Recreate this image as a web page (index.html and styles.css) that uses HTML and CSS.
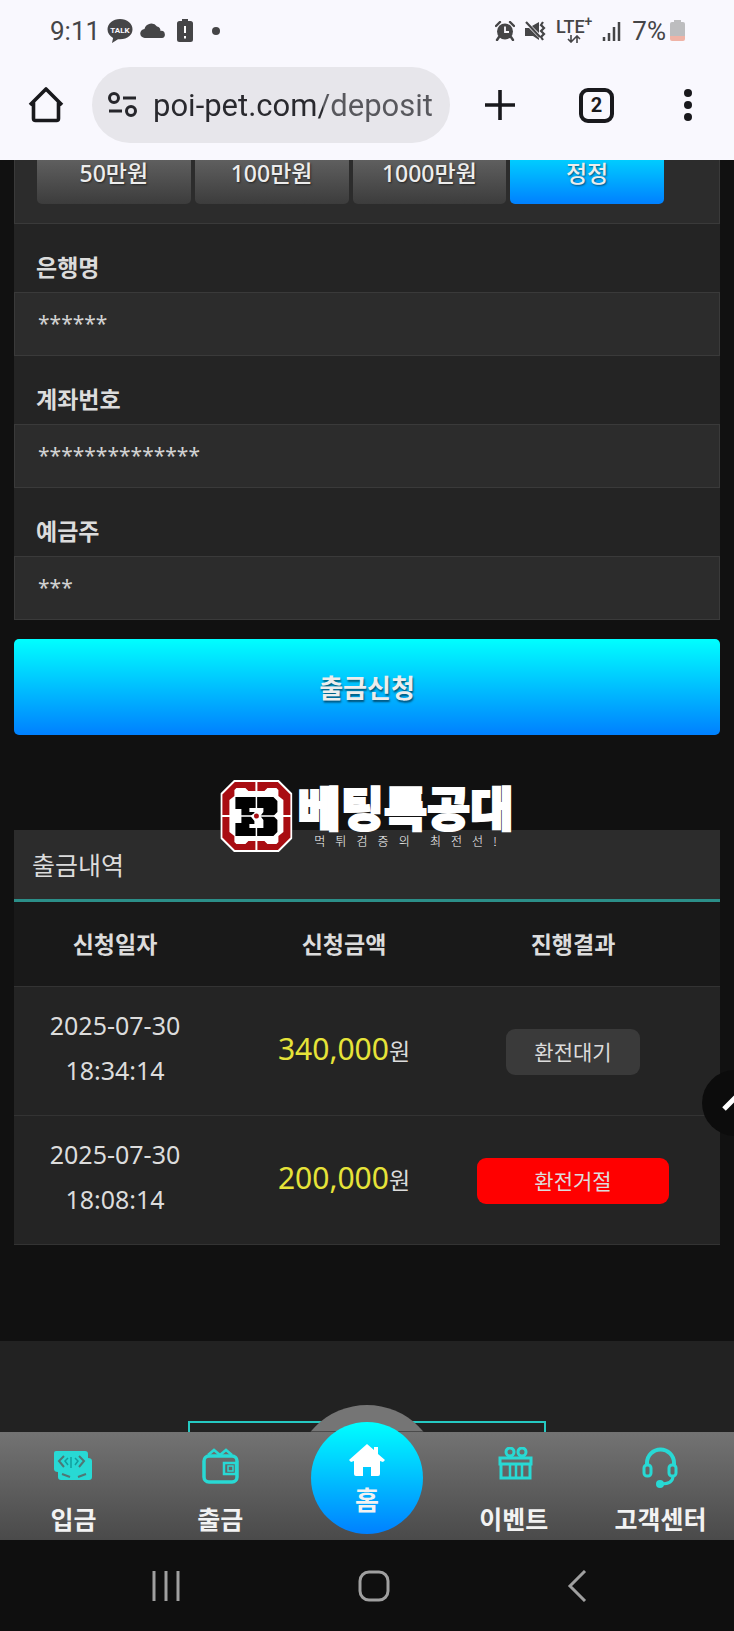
FILE: index.html
```html
<!DOCTYPE html>
<html lang="ko">
<head>
<meta charset="utf-8">
<meta name="viewport" content="width=device-width, initial-scale=1">
<title>출금신청</title>
<link rel="stylesheet" href="styles.css">
</head>
<body>
<header class="browser">
  <div class="status">
    <div class="status-left">
      <span class="clock">9:11</span>
      <svg class="talk" width="26" height="24" viewBox="0 0 26 24"><path d="M13 0C6 0 .5 4.500.5 10.300c0 3.800 2.200 6.900 5.600 8.700L5 24l6-3.800c9 .8 14.500-3.900 14.500-9.900C25.500 4.500 20 0 13 0z" fill="#454547"/><text x="13" y="13.500" text-anchor="middle" class="talk-text">TALK</text></svg>
      <svg width="26" height="16" viewBox="0 0 26 16"><path d="M5 15a4.500 4.500 0 0 1-.5-9A7 7 0 0 1 17 3.500a4.500 4.500 0 0 1 3.500 4.500A3.500 3.500 0 0 1 22 15z" fill="#454547"/></svg>
      <svg class="low" width="16" height="24" viewBox="0 0 16 24"><path d="M5 0h6v2h2.500A2.500 2.500 0 0 1 16 4.500v16a2.500 2.500 0 0 1-2.500 2.500h-11A2.500 2.500 0 0 1 0 20.500v-16A2.500 2.500 0 0 1 2.500 2H5z" fill="#454547"/><path d="M8 7v7M8 17v2.500" stroke="#fff" stroke-width="2"/></svg>
      <svg width="8" height="8" viewBox="0 0 8 8"><circle cx="4" cy="4" r="4" fill="#454547"/></svg>
    </div>
    <div class="status-right">
      <svg width="20" height="20" viewBox="0 0 20 20"><circle cx="10" cy="10.500" r="8" fill="#454547"/><path d="M1 5l4-4M19 5l-4-4M4 16l-2 3M16 16l2 3" stroke="#454547" stroke-width="2.400" stroke-linecap="round"/><path d="M10 5.500v5.500h4" fill="none" stroke="#f9f8fe" stroke-width="1.800"/></svg>
      <svg class="mute" width="21" height="20" viewBox="0 0 21 20"><path d="M0 7h4l10 10v2l-6-4H0zM7 5l7-4v11z" fill="#454547"/><path d="M1 1l14 15" stroke="#454547" stroke-width="2.200"/><path d="M18 1l-2 3 3 3-3 3 3 3-3 3 2 3" fill="none" stroke="#454547" stroke-width="2.200"/></svg>
      <span class="lte"><span>LTE<sup>+</sup></span><svg width="14" height="8" viewBox="0 0 14 8"><path d="M4 0v7M1 4l3 3 3-3M10 8V1M7 4l3-3 3 3" fill="none" stroke="#454547" stroke-width="1.600"/></svg></span>
      <svg width="20" height="20" viewBox="0 0 20 20"><path d="M2 16v4M7 12v8M12 6v14M17 1v19" stroke="#454547" stroke-width="2.500"/></svg>
      <span class="power"><span class="percent">7%</span>
      <svg width="15" height="22" viewBox="0 0 15 22"><path d="M4 0h7v2h2a2 2 0 0 1 2 2v12H0V4a2 2 0 0 1 2-2h2z" fill="#bdbdbf"/><path d="M0 16h15v3a2 2 0 0 1-2 2H2a2 2 0 0 1-2-2z" fill="#efb3a6"/></svg></span>
    </div>
  </div>
  <div class="toolbar">
    <button class="tool" aria-label="홈페이지"><svg width="36" height="36" viewBox="0 0 36 36"><path d="M2 18L18 2l16 16M5.500 15.500v16a2 2 0 0 0 2 2h21a2 2 0 0 0 2-2v-16" fill="none" stroke="#19191d" stroke-width="3.600" stroke-linejoin="round"/></svg></button>
    <div class="address">
      <svg width="30" height="26" viewBox="0 0 30 26"><g fill="none" stroke="#26262b" stroke-width="3"><circle cx="6" cy="6" r="4.500"/><circle cx="23" cy="19" r="4.500"/><path d="M15 6h13M1 19h13"/></g></svg>
      <input class="url" type="text" value="poi-pet.com/deposit" aria-label="주소">
    </div>
    <button class="tool plus" aria-label="새 탭"><svg width="32" height="32" viewBox="0 0 32 32"><path d="M16 1v30M1 16h30" stroke="#19191d" stroke-width="3.600"/></svg></button>
    <button class="tool tabs" aria-label="탭 2개">2</button>
    <button class="tool more" aria-label="메뉴"><svg width="8" height="32" viewBox="0 0 8 32"><g fill="#19191d"><circle cx="4" cy="4" r="4"/><circle cx="4" cy="16" r="4"/><circle cx="4" cy="28" r="4"/></g></svg></button>
  </div>
</header>

<main class="page">
  <form class="form">
    <div class="amounts">
      <button type="button" class="amount">50만원</button>
      <button type="button" class="amount">100만원</button>
      <button type="button" class="amount">1000만원</button>
      <button type="button" class="amount amount-reset">정정</button>
    </div>
    <label class="label" for="bank">은행명</label>
    <input class="field" id="bank" type="text" value="******">
    <label class="label" for="account">계좌번호</label>
    <input class="field" id="account" type="text" value="**************">
    <label class="label" for="holder">예금주</label>
    <input class="field" id="holder" type="text" value="***">
    <button type="button" class="submit">출금신청</button>
  </form>

  <section class="history">
    <div class="brand">
      <svg width="72" height="72" viewBox="0 0 72 72"><path d="M14 1h44l13 13v44L58 71H14L1 58V14z" fill="#a90d12" stroke="#fff" stroke-width="2"/><path d="M16 8h9l3 3h16l3-3h9l2 2v6l5 4v32l-5 4v6l-2 2h-9l-3-3H28l-3 3h-9l-2-2v-6l-5-4V20l5-4v-6z" fill="#fff"/><path d="M36 1v70M1 36h70" stroke="#fff" stroke-width="2"/><path d="M15 17h38l4 4v11l-4 4 4 4v12l-4 4H15V43h6V29h-6z" fill="#000"/><path d="M15 36h42M36 17v39" stroke="#fff" stroke-width="1.500"/><path d="M29 28h14v4l-3 4 3 4v8H29v-4h5v-3l-4-5 4-3v-1h-5z" fill="#fff"/><circle cx="36" cy="36" r="2.500" fill="#a90d12"/></svg>
      <div class="brand-text">
        <strong class="brand-name">베팅특공대</strong>
        <span class="brand-tag">먹   튀   검   증   의      최   전   선   !</span>
      </div>
    </div>
    <h2 class="title">출금내역</h2>
    <table class="table">
      <thead>
        <tr><th class="col-date">신청일자</th><th class="col-sum">신청금액</th><th class="col-state">진행결과</th></tr>
      </thead>
      <tbody>
        <tr><td class="col-date">2025-07-30<br>18:34:14</td><td class="col-sum"><span class="sum">340,000</span>원</td><td class="col-state"><span class="badge">환전대기</span></td></tr>
        <tr><td class="col-date">2025-07-30<br>18:08:14</td><td class="col-sum"><span class="sum">200,000</span>원</td><td class="col-state"><span class="badge badge-rejected">환전거절</span></td></tr>
      </tbody>
    </table>
    <button class="to-top" aria-label="맨 위로"><svg width="66" height="66" viewBox="0 0 66 66"><path d="M22 39l12-12 12 12" fill="none" stroke="#fff" stroke-width="5"/></svg></button>
  </section>

  <footer class="footer"><div class="footer-box"></div></footer>
</main>

<nav class="menu">
  <a class="item" href="#deposit"><svg width="40" height="40" viewBox="0 0 40 40"><path d="M3 4h29q3 0 3 3v4q4 0 4 3v16q0 3-3 3H8q-3 0-3-3v-5q-4 0-4-3V6q0-2 2-2z" fill="#28d9d4"/><g fill="none" stroke="#4f7775" stroke-width="2"><path d="M11 9l-5 5 5 6M26 9l5 5-5 6"/><path d="M9 27l8 3M33 27l-8 3"/></g><path d="M15 11l-3 3 3 4M22 11l3 3-3 4M18 10v11" fill="none" stroke="#129e9c" stroke-width="1.500"/></svg>입금</a>
  <a class="item" href="#withdraw"><svg width="40" height="40" viewBox="0 0 40 40"><g fill="none" stroke="#28d9d4" stroke-width="3.500"><rect x="4" y="9" width="33" height="26" rx="5"/><path d="M8 8l6-5 6 5 6-5 6 5" stroke-width="2.500"/><rect x="24" y="16" width="12" height="11" stroke-width="2.500"/><path d="M28 19h5v5h-5z" stroke-width="1.500"/></g></svg>출금</a>
  <a class="item home" href="#home"><span class="home-disc"><svg width="36" height="32" viewBox="0 0 36 32"><path d="M18 0l7 6V3h4v7l7 6-2 2-3-1v13a2 2 0 0 1-2 2h-7v-9h-8v9H7a2 2 0 0 1-2-2V17l-3 1-2-2z" fill="#fff"/></svg>홈</span></a>
  <a class="item" href="#event"><svg width="40" height="40" viewBox="0 0 40 40"><g fill="none" stroke="#28d9d4" stroke-width="3"><circle cx="16" cy="5" r="4"/><circle cx="28" cy="5" r="4"/><path d="M6 11h31v6H6zM7 17v14h29V17"/><path d="M16 18v13M22 18v13M28 18v13" stroke-width="2.500"/></g></svg>이벤트</a>
  <a class="item" href="#support"><svg width="40" height="42" viewBox="0 0 40 42"><g fill="none" stroke="#28d9d4" stroke-width="3"><path d="M6 18v-2a13 13 0 0 1 27 0v2" stroke-width="4"/><rect x="3" y="18" width="7" height="11" rx="3"/><rect x="28" y="18" width="7" height="11" rx="3"/><path d="M32 29q0 8-12 8"/></g><circle cx="19" cy="37" r="4" fill="#28d9d4"/></svg>고객센터</a>
</nav>

<div class="system">
  <button class="key" aria-label="최근 앱"><svg width="30" height="32" viewBox="0 0 30 32"><path d="M3 1v30M15 1v30M27 1v30" stroke="#a0a0a0" stroke-width="3"/></svg></button>
  <button class="key" aria-label="홈 화면"><svg width="32" height="32" viewBox="0 0 32 32"><rect x="2" y="2" width="28" height="28" rx="9" fill="none" stroke="#a0a0a0" stroke-width="3"/></svg></button>
  <button class="key" aria-label="뒤로"><svg width="20" height="32" viewBox="0 0 20 32"><path d="M18 1L3 16l15 15" fill="none" stroke="#a0a0a0" stroke-width="3"/></svg></button>
</div>
</body>
</html>
```

FILE: styles.css
```css
* { box-sizing: border-box; }

body {
  margin: 0;
  background: #111;
  color: #dcdcdc;
  font-family: "Noto Sans", "Noto Sans CJK KR", sans-serif;
  overflow-x: hidden;
}

svg { display: block; flex: none; }

button, input {
  margin: 0;
  border: 0;
  padding: 0;
  background: none;
  font-family: inherit;
}

/* Browser bar */
.browser {
  height: 160px;
  background: #f9f8fe;
  color: #454547;
  font-family: Roboto, sans-serif;
}

.status {
  display: flex;
  justify-content: space-between;
  align-items: center;
  height: 62px;
  padding: 0 49px 0 50px;
}

.status-left { display: flex; align-items: center; gap: 7px; }
.status-right { display: flex; align-items: center; gap: 10px; }
.power { display: flex; align-items: center; gap: 4px; }
.clock, .percent { font-size: 26px; line-height: 32px; }
.low { margin: 0 12px 0 4px; }

.talk-text {
  fill: #f9f8fe;
  font-family: Roboto, sans-serif;
  font-size: 8px;
  font-weight: 700;
}

.lte {
  display: flex;
  flex-direction: column;
  align-items: center;
  font-size: 18px;
  font-weight: 500;
  line-height: 16px;
}

.lte sup { font-size: 14px; line-height: 0; }

.toolbar {
  display: flex;
  align-items: center;
  height: 86px;
  padding: 0 42px 0 28px;
}

.tool { color: #19191d; }

.address {
  display: flex;
  flex: 1;
  align-items: center;
  gap: 15px;
  min-width: 0;
  height: 76px;
  margin: 0 34px 0 28px;
  padding: 0 14px 0 16px;
  border-radius: 38px;
  background: #e7e6eb;
}

.url {
  flex: 1;
  min-width: 0;
  height: 44px;
  background: linear-gradient(90deg, #29292e 170px, #58585d 170px);
  background-clip: text;
  color: transparent;
  font-family: Roboto, sans-serif;
  font-size: 31px;
}

.tabs {
  width: 35px;
  height: 35px;
  margin: 0 70px 0 63px;
  border: 4px solid #19191d;
  border-radius: 9px;
  font-family: Roboto, sans-serif;
  font-size: 20px;
  font-weight: 700;
  line-height: 24px;
}

/* Withdrawal form */
.form { padding: 0 14px; }

.amounts {
  display: grid;
  grid-template-columns: repeat(4, 1fr);
  gap: 4px;
  padding: 0 55px 19px 22px;
  border: 1px solid #3a3a3a;
  border-top: 0;
  background: #2c2c2c;
}

.amount {
  height: 44px;
  padding-bottom: 18px;
  border-radius: 0 0 5px 5px;
  background: linear-gradient(#5f5f5f, #3c3c3c);
  color: #ededed;
  font-size: 23px;
  font-weight: 500;
  line-height: 26px;
  text-shadow: 1px 1px 2px #0008;
}

.amount-reset { background: linear-gradient(#00ccff, #0080ff); }

.label {
  display: block;
  height: 68px;
  padding: 27px 22px 0;
  background: #242424;
  font-size: 23px;
  font-weight: 600;
  line-height: 32px;
}

.field {
  display: block;
  width: 100%;
  height: 64px;
  padding: 0 23px 2px;
  border: 1px solid #3a3a3a;
  background: #2c2c2c;
  color: #d2d2d2;
  font-size: 21px;
}

.submit {
  display: block;
  width: 100%;
  height: 96px;
  margin-top: 19px;
  border-radius: 5px;
  background: linear-gradient(#00ffff, #0080ff);
  color: #ededed;
  font-size: 26px;
  font-weight: 600;
  text-shadow: 1px 2px 2px #0008;
}

/* History */
.history {
  position: relative;
  margin: 95px 14px 0;
}

.brand {
  position: absolute;
  top: -50px;
  left: 50%;
  display: flex;
  gap: 5px;
  transform: translateX(-50%);
}

.brand-text {
  display: flex;
  flex-direction: column;
  align-items: center;
  color: #fff;
  font-family: "Noto Sans CJK KR", sans-serif;
  white-space: pre;
}

.brand-name {
  font-size: 47px;
  font-weight: 900;
  line-height: 52px;
  -webkit-text-stroke: 2px #fff;
}

.brand-tag { font-size: 12px; font-weight: 300; line-height: 18px; }

.title {
  margin: 0;
  padding: 16px 18px 15px;
  border-bottom: 3px solid #2b8f89;
  background: #2c2c2c;
  font-size: 25px;
  font-weight: 400;
  line-height: 38px;
}

.table {
  width: 100%;
  border-collapse: collapse;
  table-layout: fixed;
  background: #242424;
  font-size: 25px;
  line-height: 45px;
  text-align: center;
}

.table th {
  height: 84px;
  padding: 2px 0 0;
  background: #191919;
  font-size: 23px;
  font-weight: 600;
}

.table td {
  height: 129px;
  padding: 0;
  border-top: 1px solid #333;
  border-bottom: 1px solid #333;
}

.table .col-date { width: 202px; }
.table .col-sum { width: 256px; }
.table .col-state { padding-right: 46px; }
.table td.col-date { padding-bottom: 5px; }
.table td.col-sum { padding-bottom: 2px; font-size: 23px; }
.sum { color: #e6e339; font-size: 30px; }

.badge {
  display: inline-block;
  padding: 0 28px;
  border-radius: 9px;
  background: #3a3a3a;
  font-size: 21px;
  line-height: 46px;
  vertical-align: middle;
}

.badge-rejected { padding: 0 57px; background: #f00; }

.to-top {
  position: absolute;
  top: 240px;
  right: -48px;
  border-radius: 50%;
  background: #0c0c0c;
}

/* Footer and menu */
.footer {
  display: flex;
  justify-content: center;
  align-items: flex-end;
  height: 91px;
  margin-top: 96px;
  background: #222;
}

.footer-box {
  width: 358px;
  height: 11px;
  border: 2px solid #25c9c2;
  border-bottom: 0;
}

.menu {
  position: relative;
  display: grid;
  grid-template-columns: repeat(5, 1fr);
  height: 108px;
  background: linear-gradient(#737373, #4a4a4a);
}

.item {
  display: flex;
  flex-direction: column;
  align-items: center;
  justify-content: space-between;
  padding: 15px 0 3px;
  color: #f2f2f2;
  font-size: 25px;
  font-weight: 600;
  line-height: 36px;
  text-decoration: none;
}

.home { position: relative; padding: 0; }

.home::before {
  content: "";
  position: absolute;
  top: -27px;
  width: 146px;
  height: 146px;
  border-radius: 50%;
  background: #757575;
  clip-path: inset(0 0 119px 0);
}

.home-disc {
  position: absolute;
  top: -10px;
  display: flex;
  flex-direction: column;
  align-items: center;
  width: 112px;
  height: 112px;
  padding-top: 22px;
  border-radius: 50%;
  background: linear-gradient(#00ffff, #0080ff);
  font-size: 26px;
  line-height: 48px;
}

.system {
  display: flex;
  align-items: center;
  justify-content: space-between;
  height: 92px;
  padding: 0 147px 0 151px;
  background: #0f0f0f;
}
```
